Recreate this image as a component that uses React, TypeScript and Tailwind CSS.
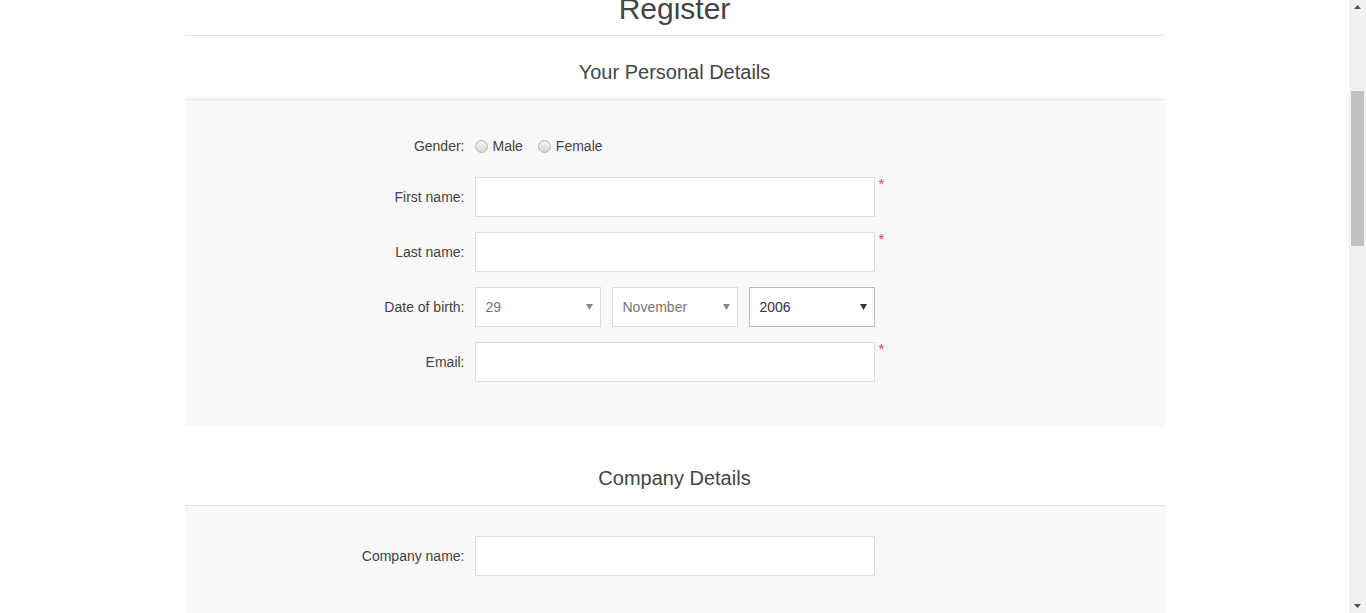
import React from "react";

const font = { fontFamily: '"Liberation Sans", Arial, sans-serif' };

function Radio({ label }: { label: string }) {
  return (
    <label className="flex items-center mr-[15px]">
      <span className="w-[13px] h-[13px] rounded-full border border-[#b5b5b5] bg-gradient-to-b from-[#f4f4f4] to-[#d8d8d8] mr-[5px]" />
      <span className="text-[14px] text-[#444]">{label}</span>
    </label>
  );
}

function Row({ label, children, required }: { label: string; children: React.ReactNode; required?: boolean }) {
  return (
    <div className="flex items-center mb-[15px]">
      <div className="w-[280px] text-right text-[14px] text-[#444] mr-[10px]">{label}</div>
      {children}
      {required && (
        <div className="self-start ml-[4px] -mt-[1px] text-[#e4434b] text-[15px] leading-[16px]">*</div>
      )}
    </div>
  );
}

function TextInput() {
  return <div className="w-[400px] h-[40px] border border-[#ddd] bg-white" />;
}

function Select({ value, dark }: { value: string; dark?: boolean }) {
  return (
    <div
      className={`w-[126px] h-[40px] border bg-white flex items-center justify-between pl-[10px] pr-[7px] ${
        dark ? "border-[#bbb] text-[#333]" : "border-[#ddd] text-[#777]"
      }`}
    >
      <span className="text-[14px]">{value}</span>
      <svg width="7" height="6" viewBox="0 0 7 6">
        <path d="M0 0 H7 L3.5 6 Z" fill={dark ? "#333" : "#888"} />
      </svg>
    </div>
  );
}

function SectionHeading({ title }: { title: string }) {
  return (
    <div className="pt-[24px] pb-[15px] border-b border-[#e2e2e2] text-center text-[20px] leading-[24px] text-[#444]">
      {title}
    </div>
  );
}

export default function App() {
  return (
    <div className="flex h-[613px] w-[1366px] overflow-hidden bg-white" style={font}>
      <div className="flex-1 flex justify-center">
        <div className="w-[980px]">
          <div className="-mt-[8px] pb-[10px] border-b border-[#e2e2e2] text-center text-[30px] leading-[33px] text-[#444]">
            Register
          </div>
          <SectionHeading title="Your Personal Details" />
          <div className="bg-[#f8f8f8] pt-[30px] pb-[30px]">
            <Row label="Gender:">
              <div className="flex items-center h-[32px]">
                <Radio label="Male" />
                <Radio label="Female" />
              </div>
            </Row>
            <Row label="First name:" required>
              <TextInput />
            </Row>
            <Row label="Last name:" required>
              <TextInput />
            </Row>
            <Row label="Date of birth:">
              <div className="flex gap-[11px]">
                <Select value="29" />
                <Select value="November" />
                <Select value="2006" dark />
              </div>
            </Row>
            <Row label="Email:" required>
              <TextInput />
            </Row>
          </div>
          <div className="h-[15px]" />
          <SectionHeading title="Company Details" />
          <div className="bg-[#f8f8f8] pt-[30px] pb-[30px]">
            <Row label="Company name:">
              <TextInput />
            </Row>
          </div>
        </div>
      </div>
      <div className="w-[17px] bg-[#f1f1f1] flex flex-col items-center justify-between py-[5px]">
        <svg width="7" height="4" viewBox="0 0 7 4">
          <path d="M0 4 L3.5 0 L7 4 Z" fill="#505050" />
        </svg>
        <div className="flex-1 w-full flex flex-col items-center">
          <div className="mt-[82px] w-[13px] h-[155px] bg-[#c1c1c1]" />
        </div>
        <svg width="7" height="4" viewBox="0 0 7 4">
          <path d="M0 0 L7 0 L3.5 4 Z" fill="#505050" />
        </svg>
      </div>
    </div>
  );
}
